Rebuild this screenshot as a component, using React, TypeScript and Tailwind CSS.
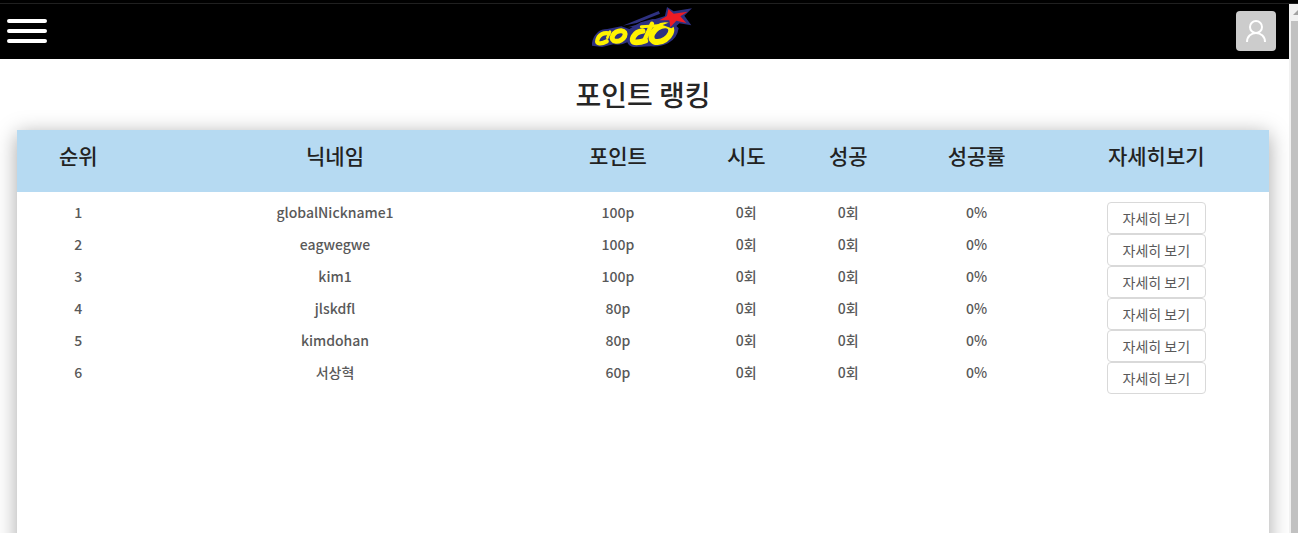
const columns = [
  { label: '순위', width: 'w-[9.8%]' },
  { label: '닉네임', width: 'w-[31.2%]' },
  { label: '포인트', width: 'w-[14%]' },
  { label: '시도', width: 'w-[6.5%]' },
  { label: '성공', width: 'w-[9.8%]' },
  { label: '성공률', width: 'w-[10.7%]' },
  { label: '자세히보기', width: 'w-[18%]' },
];

const players = [
  { name: 'globalNickname1', point: 100 },
  { name: 'eagwegwe', point: 100 },
  { name: 'kim1', point: 100 },
  { name: 'jlskdfl', point: 80 },
  { name: 'kimdohan', point: 80 },
  { name: '서상혁', point: 60 },
];

function Logo() {
  return (
    <svg viewBox="24 18 300 120" className="h-10 w-[100px]" role="img" aria-label="coto" fill="none">
      <path
        d="M24 134 Q22 112 42 93 Q52 84 70 84 L112 76 L136 84 L170 64 L206 54 L262 60 L284 82 Q280 112 252 127 Q232 138 200 136 L150 138 Q134 136 130 124 Q112 134 88 130 L54 138 Z"
        fill="#2e3180"
      />
      <path d="M116 74 L224 30 L228 38 L158 66 Z" fill="#2e3180" />
      <path d="M132 79 L244 45 L238 61 L158 78 Z" fill="#2e3180" />
      <path d="M249 18 L269 31 L324 22 L301 44 L322 73 L286 67 L265 86 L248 67 L222 67 L242 48 Z" fill="#2e3180" />
      <g stroke="#fff200" strokeLinecap="round" strokeLinejoin="round">
        <path d="M74 97 Q54 94 44 108 Q34 126 46 127 Q56 128 68 121" strokeWidth="13" />
        <path d="M78 92 L70 110" strokeWidth="8" />
        <ellipse cx="104" cy="105" rx="21" ry="14" transform="rotate(-30 104 105)" strokeWidth="15" />
        <path d="M176 90 Q157 92 149 106 Q140 124 157 124 Q171 124 184 119" strokeWidth="17" />
        <path d="M204 68 L182 116" strokeWidth="13" />
        <path d="M172 77 L222 74" strokeWidth="9" />
        <ellipse cx="232" cy="98" rx="33" ry="21" transform="rotate(-34 232 98)" strokeWidth="18" />
      </g>
      <path d="M236 72 L262 82 L286 67 L266 60 Z" fill="#2e3180" />
      <path d="M253 24 L269 38 L311 32 L289 46 L307 66 L277 59 L259 79 L256 58 L226 58 L249 45 Z" fill="#ed1c24" />
    </svg>
  );
}

export default function App() {
  return (
    <div className="flex h-screen flex-col overflow-hidden bg-white font-['Noto_Sans_CJK_KR','Noto_Sans',sans-serif] text-sm font-medium text-[#595959]">
      <div className="h-1 shrink-0 border-b border-[#202020] bg-black" />
      <div className="flex min-h-0 flex-1">
        <div className="min-w-0 flex-1 overflow-hidden">
          <header className="grid h-[55px] grid-cols-3 items-center bg-black pb-0.5 pl-[7px] pr-[13px]">
            <button type="button" aria-label="메뉴" className="w-10">
              <svg viewBox="0 0 40 26" className="h-[26px] w-10" stroke="white" strokeWidth="4" strokeLinecap="round">
                <path d="M2 3H38M2 13H38M2 23H38" />
              </svg>
            </button>
            <a href="#" className="-mt-2 justify-self-center">
              <Logo />
            </a>
            <button
              type="button"
              aria-label="내 정보"
              className="flex size-10 items-center justify-center justify-self-end rounded bg-[#ccc]"
            >
              <svg viewBox="0 0 24 24" className="size-6" fill="none" stroke="white" strokeWidth="2">
                <circle cx="12" cy="8" r="6" />
                <path d="M3 23 C3 11 21 11 21 23" />
              </svg>
            </button>
          </header>
          <main className="pl-[17px] pr-5">
            <h1 className="py-4 text-center text-[28px] leading-[39px] text-[#262626]">포인트 랭킹</h1>
            <section className="h-screen bg-white shadow-[0_4px_20px_rgba(0,0,0,0.35)]">
              <table className="w-full table-fixed text-center">
                <thead className="bg-[#b6daf2] text-[21px] leading-[30px] text-[#222]">
                  <tr>
                    {columns.map((c) => (
                      <th key={c.label} scope="col" className={`${c.width} px-0 pb-[22px] pt-[10px] font-medium`}>
                        {c.label}
                      </th>
                    ))}
                  </tr>
                </thead>
                <tbody className="leading-5 before:block before:h-[10px]">
                  {players.map((p, i) => (
                    <tr key={p.name} className="h-8 align-top">
                      <td>{i + 1}</td>
                      <td>{p.name}</td>
                      <td>{p.point}p</td>
                      <td>0회</td>
                      <td>0회</td>
                      <td>0%</td>
                      <td>
                        <button
                          type="button"
                          className="mx-auto block h-8 rounded-[4px] border border-[#d9d9d9] bg-white px-[15px] font-normal"
                        >
                          자세히 보기
                        </button>
                      </td>
                    </tr>
                  ))}
                </tbody>
              </table>
            </section>
          </main>
        </div>
        <div className="flex w-[9px] shrink-0 flex-col overflow-hidden bg-[#f1f1f1] pl-0.5" aria-hidden="true">
          <svg viewBox="0 0 7 17" className="h-[17px] w-[7px] shrink-0" fill="#a3a3a3">
            <path d="M2 11 L7 6 V11 Z" />
          </svg>
          <div className="flex-1 bg-[#c1c1c1]" />
        </div>
      </div>
    </div>
  );
}
